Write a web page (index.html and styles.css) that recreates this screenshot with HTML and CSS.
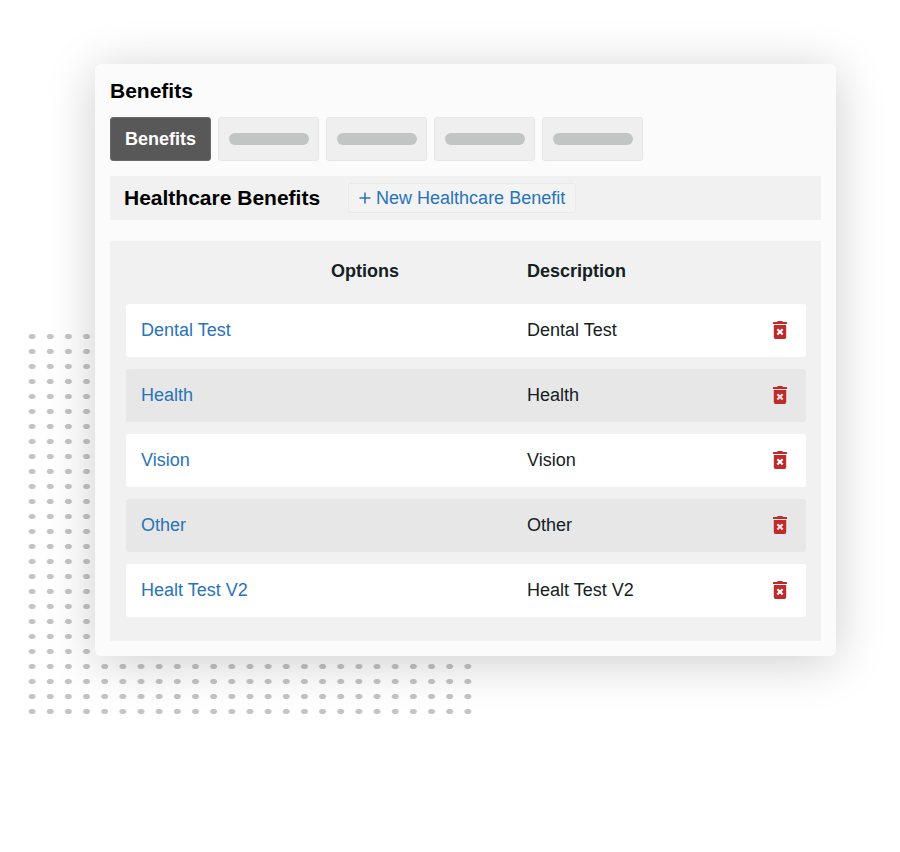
FILE: index.html
```html
<!DOCTYPE html>
<html lang="en">
<head>
	<meta charset="UTF-8">
	<meta name="viewport" content="width=device-width, initial-scale=1">
	<title>Benefits</title>
	<link rel="stylesheet" href="styles.css">
</head>
<body>
	<svg class="sprite" aria-hidden="true">
		<symbol id="trash" viewBox="0 0 14 18">
			<path fill-rule="evenodd" d="M0.5 1H4Q4.4 0 5.4 0H8.6Q9.6 0 10 1H13.5Q14 1 14 1.6V3H0V1.6Q0 1 0.5 1zM0.8 4H13.2V16.2A1.8 1.8 0 0 1 11.4 18H2.6A1.8 1.8 0 0 1 0.8 16.2zM5.1 7.4L3.6 8.9 5.5 10.8 3.6 12.7 5.1 14.2 7 12.3 8.9 14.2 10.4 12.7 8.5 10.8 10.4 8.9 8.9 7.4 7 9.3z"/>
		</symbol>
	</svg>
	<main class="stage">
		<div class="dots"></div>
		<section class="card">
			<h1 class="title">Benefits</h1>
			<div class="tabs">
				<button type="button" class="tab active">Benefits</button>
				<button type="button" class="tab" aria-label="Tab 2"><span class="pill"></span></button>
				<button type="button" class="tab" aria-label="Tab 3"><span class="pill"></span></button>
				<button type="button" class="tab" aria-label="Tab 4"><span class="pill"></span></button>
				<button type="button" class="tab" aria-label="Tab 5"><span class="pill"></span></button>
			</div>
			<div class="bar">
				<h2 class="title">Healthcare Benefits</h2>
				<button type="button" class="add">
					<svg width="12" height="12" viewBox="0 0 12 12" aria-hidden="true"><path d="M6 0.5v11M0.5 6h11" stroke="currentColor" stroke-width="1.5"/></svg>
					New Healthcare Benefit
				</button>
			</div>
			<div class="panel">
				<table class="list">
					<thead>
						<tr>
							<th class="name"></th>
							<th class="options">Options</th>
							<th>Description</th>
							<th class="action"></th>
						</tr>
					</thead>
					<tbody>
						<tr>
							<td><a href="#">Dental Test</a></td>
							<td></td>
							<td>Dental Test</td>
							<td><button type="button" class="del" aria-label="Delete"><svg><use href="#trash"/></svg></button></td>
						</tr>
						<tr>
							<td><a href="#">Health</a></td>
							<td></td>
							<td>Health</td>
							<td><button type="button" class="del" aria-label="Delete"><svg><use href="#trash"/></svg></button></td>
						</tr>
						<tr>
							<td><a href="#">Vision</a></td>
							<td></td>
							<td>Vision</td>
							<td><button type="button" class="del" aria-label="Delete"><svg><use href="#trash"/></svg></button></td>
						</tr>
						<tr>
							<td><a href="#">Other</a></td>
							<td></td>
							<td>Other</td>
							<td><button type="button" class="del" aria-label="Delete"><svg><use href="#trash"/></svg></button></td>
						</tr>
						<tr>
							<td><a href="#">Healt Test V2</a></td>
							<td></td>
							<td>Healt Test V2</td>
							<td><button type="button" class="del" aria-label="Delete"><svg><use href="#trash"/></svg></button></td>
						</tr>
					</tbody>
				</table>
			</div>
		</section>
	</main>
</body>
</html>
```

FILE: styles.css
```css
*{
	margin: 0;
	padding: 0;
	box-sizing: border-box;
}
body{
	background-color: #fff;
	color: #14211f;
	font: 18px/24px "Liberation Sans", Arial, sans-serif;
}
button{
	font: inherit;
	cursor: pointer;
}
.sprite{
	position: absolute;
	width: 0;
	height: 0;
}
.stage{
	position: relative;
	margin: 64px 64px 64px 95px;
}
/* dotted backdrop, sticks out of the lower left corner */
.dots{
	position: absolute;
	left: -72px;
	bottom: -63px;
	width: 454px;
	height: 390px;
	background-image: radial-gradient(ellipse 4px 3px, #c4c4c4 75%, transparent 100%);
	background-size: 18px 15px;
	background-repeat: round;
}
.card{
	position: relative;
	padding: 15px;
	border-radius: 6px;
	background-color: #fbfbfb;
	box-shadow: 0 6px 50px rgba(0,0,0,0.2);
}
.title{
	color: #000;
	font-size: 21px;
	line-height: 24px;
}
.tabs{
	display: flex;
	gap: 7px;
	margin: 14px 0 15px;
}
.tab{
	display: flex;
	align-items: center;
	justify-content: center;
	width: 101px;
	height: 44px;
	border: 1px solid #e6e7e7;
	border-radius: 3px;
	background-color: #efefef;
}
.tab.active{
	border-color: #6b6b6b;
	background-color: #585858;
	color: #fff;
	font-weight: bold;
}
.pill{
	width: 80px;
	height: 12px;
	border-radius: 6px;
	background-color: #c1c5c4;
}
.bar{
	display: flex;
	align-items: center;
	gap: 28px;
	height: 44px;
	padding: 0 14px;
	margin-bottom: 21px;
	background-color: #f1f1f1;
}
.add{
	display: flex;
	align-items: center;
	gap: 5px;
	height: 30px;
	padding: 0 10px;
	border: 1px solid #e8e9e9;
	border-radius: 3px;
	background-color: #f3f3f3;
	color: #2873b9;
}
.panel{
	padding: 0 15px 12px 16px;
	background-color: #f1f1f1;
}
.list{
	width: 100%;
	table-layout: fixed;
	border-collapse: separate;
	border-spacing: 0 12px;
}
.list th{
	height: 39px;
	padding: 0 15px 4px;
	text-align: left;
}
.list .name{
	width: 190px;
}
.list .options{
	width: 196px;
}
.list .action{
	width: 48px;
}
.list td{
	height: 53px;
	padding: 0 15px 1px;
	background-color: #fff;
}
.list tr:nth-child(even) td{
	background-color: #e7e7e7;
}
.list td:first-child{
	border-radius: 3px 0 0 3px;
}
.list td:last-child{
	border-radius: 0 3px 3px 0;
}
.list a{
	color: #2873b9;
	text-decoration: none;
}
.list a:hover{
	text-decoration: underline;
}
.del{
	display: block;
	border: 0;
	background: none;
}
.del svg{
	display: block;
	width: 14px;
	height: 18px;
	fill: #c12a2b;
}
```
